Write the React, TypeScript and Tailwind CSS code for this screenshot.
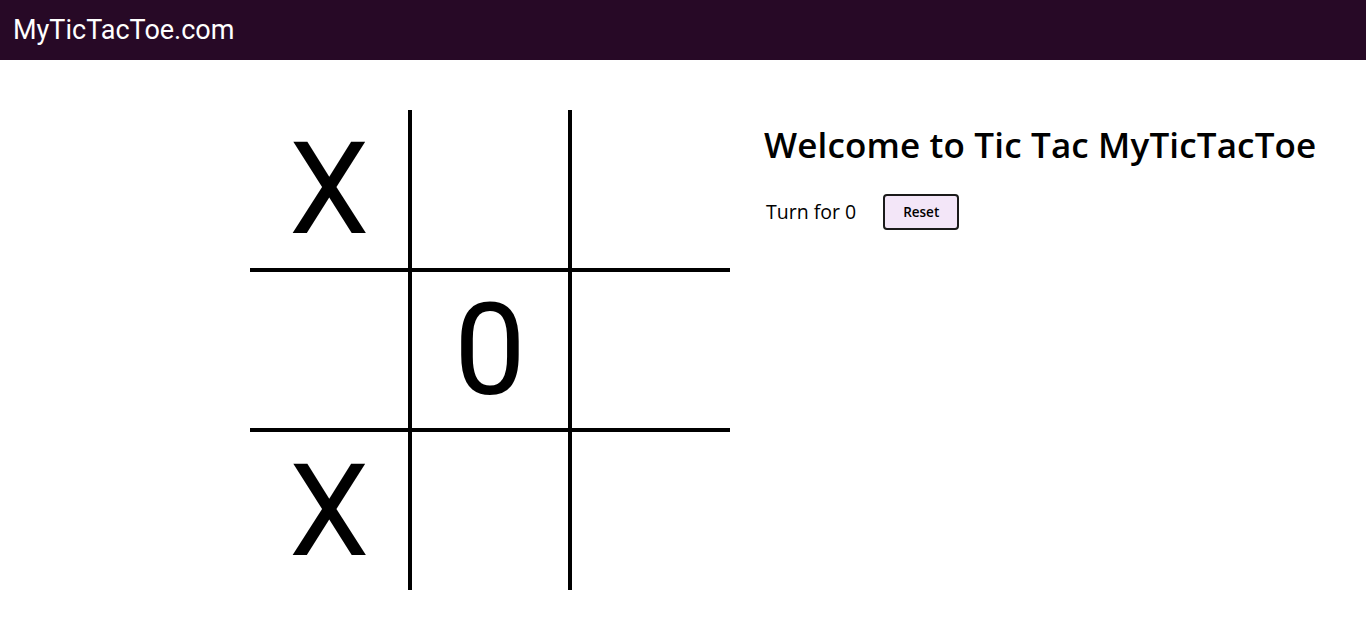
import React from "react";

const cells: string[] = ["X", "", "", "", "0", "", "X", "", ""];

function cellClass(i: number): string {
  const row = Math.floor(i / 3);
  const col = i % 3;
  const parts: string[] = ["flex items-center justify-center border-black"];
  if (col === 1) parts.push("w-[164px] border-l-4 border-r-4");
  else parts.push("w-[158px]");
  if (row === 0) parts.push("h-[162px] border-b-4");
  else if (row === 1) parts.push("h-[160px] border-b-4");
  else parts.push("h-[158px]");
  return parts.join(" ");
}

export default function App() {
  return (
    <div className="min-h-[617px] bg-white">
      <header className="h-[60px] bg-[#270926] flex items-center pl-[13px]">
        <span className="text-white text-[27px] font-['Roboto',sans-serif] leading-none">
          MyTicTacToe.com
        </span>
      </header>
      <main className="flex pl-[250px] pt-[50px] gap-[34px]">
        <div className="grid grid-cols-[158px_164px_158px] w-[480px]">
          {cells.map((c, i) => (
            <div key={i} className={cellClass(i)}>
              <span className="text-[128px] leading-none font-['Roboto',sans-serif] text-black">
                {c}
              </span>
            </div>
          ))}
        </div>
        <div className="pt-[13px] font-['Open_Sans',sans-serif]">
          <h1 className="text-[35px] leading-[44px] font-semibold text-black tracking-[0.15px]">
            Welcome to Tic Tac MyTicTacToe
          </h1>
          <div className="flex items-center mt-[27px] pl-[2px]">
            <span className="text-[19.5px] text-black leading-none">Turn for 0</span>
            <button className="ml-[27px] w-[76px] h-[36px] bg-[#f3e6f8] border-2 border-[#1a1a1a] rounded-[4px] text-[13.5px] font-semibold text-black">
              Reset
            </button>
          </div>
        </div>
      </main>
    </div>
  );
}
